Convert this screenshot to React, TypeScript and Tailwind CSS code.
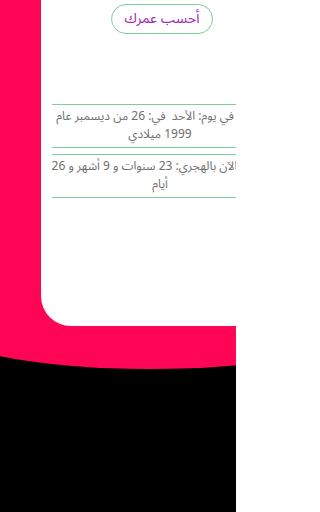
export default function App() {
  const arabic = { fontFamily: '"Noto Sans Arabic", "DejaVu Sans", sans-serif' }

  return (
    <div className="w-[236px] h-[512px] overflow-hidden bg-black">
      {/* the page is laid out for a 320px wide screen; only the left part shows */}
      <div className="w-[320px] overflow-hidden">
        {/* pink backdrop with curved bottom */}
        <div className="w-[420px] h-[369px] -ml-[60px] bg-[#ff0556] rounded-bl-[210px_43px] rounded-br-[210px_43px] pl-[101px]">
          {/* white card */}
          <div className="w-[238px] h-[326px] bg-white rounded-b-[30px] px-[11px] pt-[4px]" style={arabic}>
            <div className="flex justify-center">
              <button dir="rtl" className="w-[102px] h-[30px] ml-[4px] rounded-full border border-[#7ccf98] text-[#9c27b0] text-[14px] leading-none">
                أحسب عمرك
              </button>
            </div>

            <div className="mt-[70px] flex flex-col gap-[6px]">
              <div className="border-y border-[#7ccf98] py-[3px]">
                <p dir="rtl" className="-mx-[4px] text-center text-[12px] leading-[18px] text-[#6e6e6e]">
                  ولدت في يوم: الأحد{'\u00A0'} في: 26 من ديسمبر عام 1999 ميلادي
                </p>
              </div>
              <div className="border-y border-[#7ccf98] py-[3px]">
                <p dir="rtl" className="-mx-[4px] text-center text-[12px] leading-[18px] text-[#6e6e6e]">
                  عمرك الآن بالهجري: 23 سنوات و 9 أشهر و 26 أيام
                </p>
              </div>
            </div>
          </div>
        </div>
      </div>
    </div>
  )
}
